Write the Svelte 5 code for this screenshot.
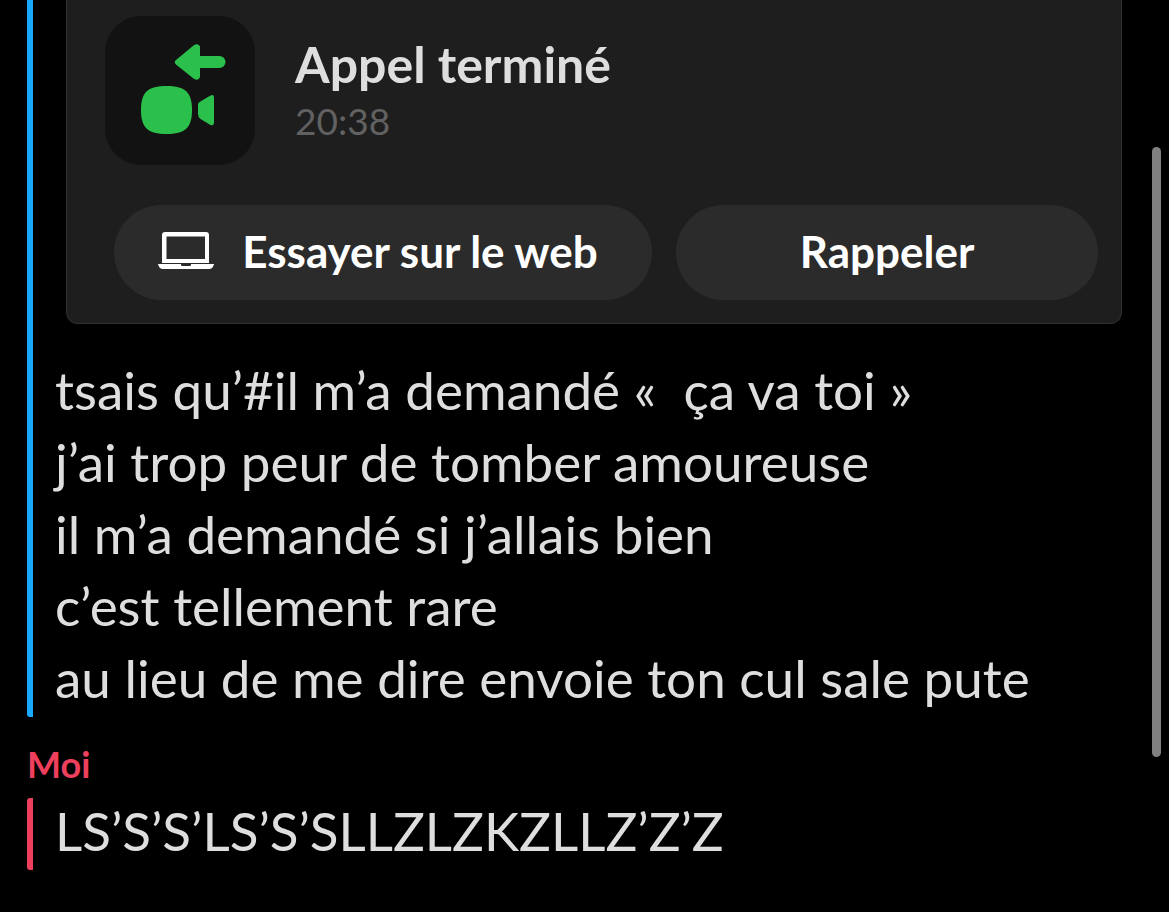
<script lang="ts">
  // Chat thread: an ended call card, the friend's messages, then my reply.

  interface Props {
    onOpenWeb?: () => void;
    onCallBack?: () => void;
  }

  let { onOpenWeb, onCallBack }: Props = $props();

  const received = [
    "tsais qu’#il m’a demandé «\u00a0 ça va toi »",
    "j’ai trop peur de tomber amoureuse",
    "il m’a demandé si j’allais bien",
    "c’est tellement rare",
    "au lieu de me dire envoie ton cul sale pute",
  ];
  const sent = ["LS’S’S’LS’S’SLLZLZKZLLZ’Z’Z"];
</script>

<main class="thread">
  <section class="group received">
    <article class="call-card">
      <header class="call-header">
        <div class="call-icon">
          <svg viewBox="0 0 150 150" aria-hidden="true">
            <path d="M71 44 L88.5 29.5 Q93 26.5 95 30.5 V40 H114.5 A6 6 0 0 1 114.5 52 H95 V61 Q93.5 65.5 88.5 62.5 L71 48.5 Q68.5 46 71 44Z" />
            <path d="M61.5 70 C80 70 87 76 87 94 C87 112 80 118 61.5 118 C43 118 36 112 36 94 C36 76 43 70 61.5 70Z" />
            <path d="M94.5 86 L105.5 79.5 Q109 78 109 82 V106 Q109 110 105.5 109 L95.5 103 Q93 101 93 98 V89 Q93 87 94.5 86Z" />
          </svg>
        </div>
        <div>
          <h2>Appel terminé</h2>
          <time datetime="20:38">20:38</time>
        </div>
      </header>
      <div class="actions">
        <button class="web" type="button" onclick={() => onOpenWeb?.()}>
          <svg viewBox="0 0 56 38" aria-hidden="true">
            <path d="M7 0 H48 Q51 0 51 3 V31 H4 V3 Q4 0 7 0Z M8.5 4.5 V27 H47 V4.5Z" fill="currentColor" fill-rule="evenodd" />
            <path d="M0 32 H23 V33 Q23 34 24.5 34 H31.5 Q33 34 33 33 V32 H56 Q55 37 51 37 H5 Q1 37 0 32Z" fill="currentColor" />
          </svg>
          <span>Essayer sur le web</span>
        </button>
        <button class="recall" type="button" onclick={() => onCallBack?.()}>Rappeler</button>
      </div>
    </article>
    {#each received as line}
      <p>{line}</p>
    {/each}
  </section>

  <h3 class="sender">Moi</h3>
  <section class="group sent">
    {#each sent as line}
      <p>{line}</p>
    {/each}
  </section>

  <div class="scroll-thumb"></div>
</main>

<style>
  :global(body) {
    background: #000;
  }
  .thread {
    position: relative;
    padding: 0 47px 42px 27px;
    color: #dedede;
    font-family: Lato, "Open Sans", sans-serif;
  }
  h2, h3, p {
    margin: 0;
  }
  .group {
    border-left: 6px solid;
    border-radius: 3px;
    padding-left: 22px;
  }
  .received {
    border-color: #19a9fb;
    border-top-left-radius: 0;
  }
  .sent {
    border-color: #ee3f5d;
  }
  .group p {
    padding-bottom: 6px;
    font-size: 53px;
    line-height: 66px;
  }
  .call-card {
    margin: 0 0 33px 11px;
    padding: 16px 23px 23px 38px;
    background: #1e1e1e;
    border: 1px solid #303030;
    border-top: none;
    border-radius: 0 0 12px 12px;
  }
  .call-header {
    display: flex;
    gap: 40px;
  }
  .call-icon {
    width: 150px;
    height: 149px;
    background: #121212;
    border-radius: 36px;
    fill: #2bc04b;
  }
  .call-icon svg {
    display: block;
  }
  h2 {
    margin-top: 16px;
    font-size: 50px;
    font-weight: 700;
    line-height: 64px;
  }
  time {
    display: block;
    color: #616161;
    font-size: 37px;
    line-height: 50px;
  }
  .actions {
    display: flex;
    gap: 24px;
    margin: 40px 0 0 9px;
  }
  button {
    display: flex;
    align-items: center;
    justify-content: center;
    height: 95px;
    padding: 0 0 4px;
    border: none;
    border-radius: 48px;
    background: #2b2b2b;
    color: #fff;
    font: 700 44px Lato, "Open Sans", sans-serif;
    cursor: pointer;
  }
  .web {
    flex: 528;
    gap: 28px;
    padding-right: 10px;
  }
  .web svg {
    width: 56px;
    height: 38px;
  }
  .recall {
    flex: 422;
  }
  .sender {
    padding: 27px 0 14px;
    color: #ee3f5d;
    font-size: 36px;
    font-weight: 700;
    line-height: 40px;
  }
  .scroll-thumb {
    position: absolute;
    top: 147px;
    right: 8px;
    width: 9px;
    height: 610px;
    border-radius: 5px;
    background: #808080;
  }
</style>
